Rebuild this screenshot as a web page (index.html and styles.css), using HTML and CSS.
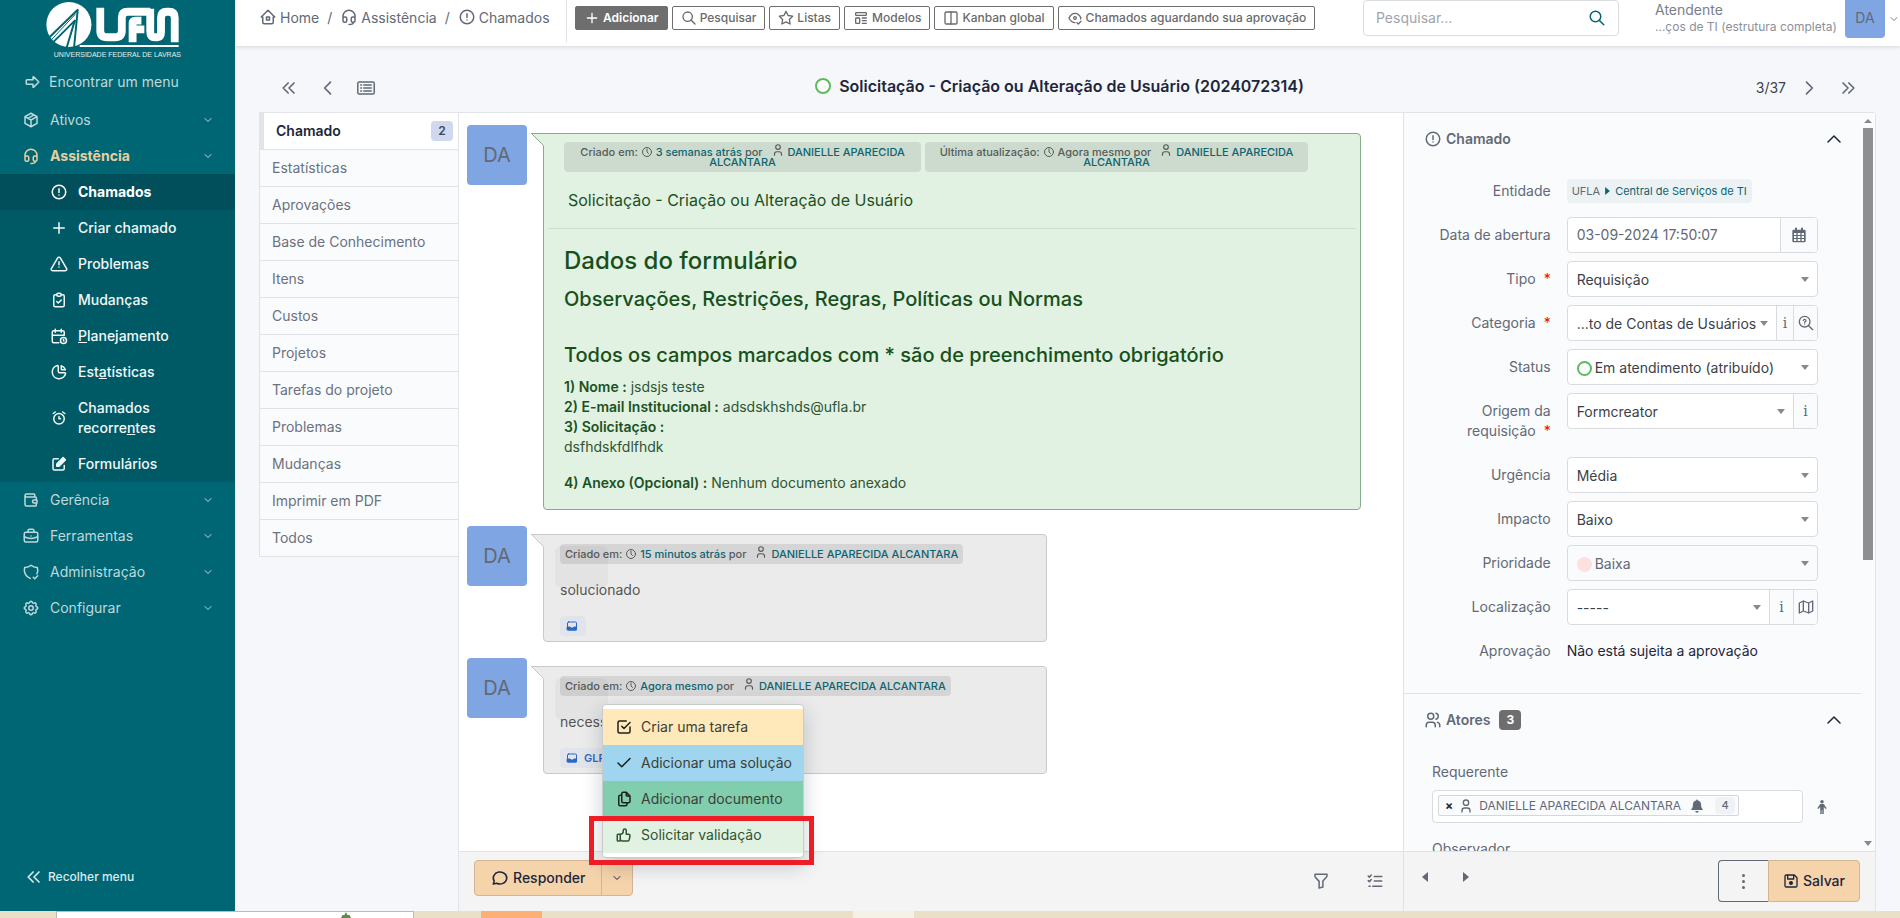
FILE: index.html
```html
<!DOCTYPE html>
<html lang="pt-BR">
<head>
<meta charset="utf-8">
<title>Solicitação - Criação ou Alteração de Usuário (2024072314)</title>
<link rel="stylesheet" href="styles.css">
</head>
<body>
<svg class="sprite" aria-hidden="true">
  <symbol id="arrow-right" viewBox="0 0 24 24"><path d="M4 9h8V5.500a.5.5 0 0 1 .85-.35l6.700 6.500a.5.5 0 0 1 0 .7l-6.700 6.500a.5.5 0 0 1-.85-.35V15H4a1 1 0 0 1-1-1v-4a1 1 0 0 1 1-1z"/></symbol>
  <symbol id="package" viewBox="0 0 24 24"><path d="M12 3l8 4.500v9L12 21l-8-4.500v-9zM12 12l8-4.500M12 12v9M12 12L4 7.500M16 5.250l-8 4.500"/></symbol>
  <symbol id="headset" viewBox="0 0 24 24"><path d="M4 14v-3a8 8 0 1 1 16 0v3M18 19c0 1.657-2.686 3-6 3M4 14a2 2 0 0 1 2-2h1a2 2 0 0 1 2 2v3a2 2 0 0 1-2 2H6a2 2 0 0 1-2-2zM15 14a2 2 0 0 1 2-2h1a2 2 0 0 1 2 2v3a2 2 0 0 1-2 2h-1a2 2 0 0 1-2-2z"/></symbol>
  <symbol id="alert-circle" viewBox="0 0 24 24"><circle cx="12" cy="12" r="9"/><path d="M12 7.500v5M12 16v.01"/></symbol>
  <symbol id="plus" viewBox="0 0 24 24"><path d="M12 5v14M5 12h14"/></symbol>
  <symbol id="alert-triangle" viewBox="0 0 24 24"><path d="M12 9v4M12 16v.01M10.240 3.960l-8.420 14.060A1.989 1.989 0 0 0 3.520 21h16.950a1.989 1.989 0 0 0 1.700-2.980L13.730 3.960a2 2 0 0 0-3.490 0z"/></symbol>
  <symbol id="clipboard" viewBox="0 0 24 24"><path d="M9 5H7a2 2 0 0 0-2 2v12a2 2 0 0 0 2 2h10a2 2 0 0 0 2-2V7a2 2 0 0 0-2-2h-2M9 14l2 2 4-4"/><rect x="9" y="3" width="6" height="4" rx="2"/></symbol>
  <symbol id="calendar-time" viewBox="0 0 24 24"><path d="M11.800 21H5a2 2 0 0 1-2-2V7a2 2 0 0 1 2-2h12a2 2 0 0 1 2 2v4M15 3v4M7 3v4M3 11h16M18 16.500V18l.5.5"/><circle cx="18" cy="18" r="4"/></symbol>
  <symbol id="chart-pie" viewBox="0 0 24 24"><path d="M10 3.200A9 9 0 1 0 20.800 14a1 1 0 0 0-1-1H13a2 2 0 0 1-2-2V4a.9.9 0 0 0-1-.8M15 3.500A9 9 0 0 1 20.500 9H16a1 1 0 0 1-1-1z"/></symbol>
  <symbol id="alarm" viewBox="0 0 24 24"><circle cx="12" cy="13" r="7"/><path d="M12 10v3h2M7 4L4.250 6M17 4l2.750 2"/></symbol>
  <symbol id="edit" viewBox="0 0 24 24"><path d="M11 5H6a2 2 0 0 0-2 2v11a2 2 0 0 0 2 2h11a2 2 0 0 0 2-2v-4"/><path fill="currentColor" d="M9 15v-3l8.500-8.500 3 3L12 15z"/></symbol>
  <symbol id="wallet" viewBox="0 0 24 24"><path d="M17 8V5a1 1 0 0 0-1-1H6a2 2 0 0 0 0 4h12a1 1 0 0 1 1 1v3m0 4v3a1 1 0 0 1-1 1H6a2 2 0 0 1-2-2V6M20 12v4h-4a2 2 0 0 1 0-4h4"/></symbol>
  <symbol id="briefcase" viewBox="0 0 24 24"><rect x="3" y="7" width="18" height="13" rx="2"/><path d="M8 7V5a2 2 0 0 1 2-2h4a2 2 0 0 1 2 2v2M12 12v.01M3 13a20 20 0 0 0 18 0"/></symbol>
  <symbol id="shield" viewBox="0 0 24 24"><path d="M11 20.500A12 12 0 0 1 3.500 6 12 12 0 0 0 12 3a12 12 0 0 0 8.500 3 12 12 0 0 1-.6 8.500M15 19l2 2 4-4"/></symbol>
  <symbol id="settings" viewBox="0 0 24 24"><path d="M10.325 4.317c.426-1.756 2.924-1.756 3.350 0a1.724 1.724 0 0 0 2.573 1.066c1.543-.94 3.310.826 2.370 2.370a1.724 1.724 0 0 0 1.065 2.572c1.756.426 1.756 2.924 0 3.350a1.724 1.724 0 0 0-1.066 2.573c.94 1.543-.826 3.310-2.370 2.370a1.724 1.724 0 0 0-2.572 1.065c-.426 1.756-2.924 1.756-3.350 0a1.724 1.724 0 0 0-2.573-1.066c-1.543.94-3.310-.826-2.370-2.370a1.724 1.724 0 0 0-1.065-2.572c-1.756-.426-1.756-2.924 0-3.350a1.724 1.724 0 0 0 1.066-2.573c-.94-1.543.826-3.310 2.370-2.370 1 .608 2.296.07 2.572-1.065z"/><circle cx="12" cy="12" r="3"/></symbol>
  <symbol id="chev-down" viewBox="0 0 24 24"><path d="M6 9l6 6 6-6"/></symbol>
  <symbol id="chev-up" viewBox="0 0 24 24"><path d="M4 16l8-8 8 8"/></symbol>
  <symbol id="chev-left" viewBox="0 0 24 24"><path d="M15 5l-7 7 7 7"/></symbol>
  <symbol id="chev-right" viewBox="0 0 24 24"><path d="M9 5l7 7-7 7"/></symbol>
  <symbol id="chevs-left" viewBox="0 0 24 24"><path d="M11 6l-6 6 6 6M18 6l-6 6 6 6"/></symbol>
  <symbol id="chevs-right" viewBox="0 0 24 24"><path d="M6 6l6 6-6 6M13 6l6 6-6 6"/></symbol>
  <symbol id="home" viewBox="0 0 24 24"><path d="M5 12H3l9-9 9 9h-2M5 12v7a2 2 0 0 0 2 2h10a2 2 0 0 0 2-2v-7M10 12h4v4h-4z"/></symbol>
  <symbol id="search" viewBox="0 0 24 24"><circle cx="10" cy="10" r="7"/><path d="M21 21l-6-6"/></symbol>
  <symbol id="star" viewBox="0 0 24 24"><path d="M12 17.750l-6.172 3.245 1.179-6.873-5-4.867 6.900-1L11.993 2l3.086 6.253 6.900 1-5 4.867 1.179 6.873z"/></symbol>
  <symbol id="template" viewBox="0 0 24 24"><rect x="4" y="4" width="16" height="4" rx="1"/><rect x="4" y="12" width="6" height="8" rx="1"/><path d="M14 12h6M14 16h6M14 20h6"/></symbol>
  <symbol id="columns" viewBox="0 0 24 24"><rect x="3" y="3" width="18" height="18" rx="2"/><path d="M12 3v18"/></symbol>
  <symbol id="eye-check" viewBox="0 0 24 24"><circle cx="12" cy="12" r="2"/><path d="M12 19c-4 0-7-3-9-7 2-4 5-7 9-7s7 3 9 7l-.8 1.500M15 19l2 2 4-4"/></symbol>
  <symbol id="list-box" viewBox="0 0 24 24"><rect x="1" y="4" width="22" height="16" rx="2"/><path d="M9 8h10M9 12h10M9 16h10M5 8h1M5 12h1M5 16h1"/></symbol>
  <symbol id="clock" viewBox="0 0 24 24"><circle cx="12" cy="12" r="9"/><path d="M12 6v6l3 3"/></symbol>
  <symbol id="user" viewBox="0 0 24 24"><circle cx="12" cy="7" r="4"/><path d="M6 21v-2a4 4 0 0 1 4-4h4a4 4 0 0 1 4 4v2"/></symbol>
  <symbol id="users" viewBox="0 0 24 24"><circle cx="9" cy="7" r="4"/><path d="M3 21v-2a4 4 0 0 1 4-4h4a4 4 0 0 1 4 4v2M16 3.130a4 4 0 0 1 0 7.750M21 21v-2a4 4 0 0 0-3-3.850"/></symbol>
  <symbol id="inbox" viewBox="0 0 24 24"><rect x="3" y="4" width="18" height="16" rx="2"/><path fill="currentColor" d="M3 14h5l2 2h4l2-2h5v6H3z"/></symbol>
  <symbol id="checkbox" viewBox="0 0 24 24"><path d="M9 11l3 3 8-8M20 12v6a2 2 0 0 1-2 2H6a2 2 0 0 1-2-2V6a2 2 0 0 1 2-2h9"/></symbol>
  <symbol id="check" viewBox="0 0 24 24"><path d="M4 12l5 5L20 6"/></symbol>
  <symbol id="files" viewBox="0 0 24 24"><path d="M15 3v4a1 1 0 0 0 1 1h4M18 17h-7a2 2 0 0 1-2-2V5a2 2 0 0 1 2-2h4l5 5v7a2 2 0 0 1-2 2zM16 17v2a2 2 0 0 1-2 2H7a2 2 0 0 1-2-2V9a2 2 0 0 1 2-2h2"/></symbol>
  <symbol id="thumb-up" viewBox="0 0 24 24"><path d="M7 11v8a1 1 0 0 1-1 1H4a1 1 0 0 1-1-1v-7a1 1 0 0 1 1-1h3a4 4 0 0 0 4-4V6a2 2 0 0 1 4 0v5h3a2 2 0 0 1 2 2l-1 5a2 3 0 0 1-2 2h-7a3 3 0 0 1-3-3"/></symbol>
  <symbol id="message" viewBox="0 0 24 24"><path d="M3 20l1.300-3.900a9 8 0 1 1 3.400 2.900z"/></symbol>
  <symbol id="filter" viewBox="0 0 24 24"><path d="M4 3h16v2.200a2 2 0 0 1-.6 1.400L14.500 12v8l-5 1.500V12.500L4.500 7A2 2 0 0 1 4 5.600z"/></symbol>
  <symbol id="list-check" viewBox="0 0 24 24"><path d="M3 5.500L4.500 7 7 4M3 11.500L4.500 13 7 10M4 19h1.500M11 6h10M11 12h10M9 19h12"/></symbol>
  <symbol id="floppy" viewBox="0 0 24 24"><path d="M6 3h11l4 4v12a2 2 0 0 1-2 2H5a2 2 0 0 1-2-2V5a2 2 0 0 1 2-2zM7 3v6h9V3"/><circle cx="12" cy="15" r="2" fill="currentColor"/></symbol>
  <symbol id="calendar" viewBox="0 0 24 24"><path fill="currentColor" stroke="none" fill-rule="evenodd" d="M6 1h3v3h6V1h3v3h2a2 2 0 0 1 2 2v15a2 2 0 0 1-2 2H4a2 2 0 0 1-2-2V6a2 2 0 0 1 2-2h2zM4.500 9v3h3.500V9zM10 9v3h4V9zM16 9v3h3.500V9zM4.500 13.500v3h3.500v-3zM10 13.500v3h4v-3zM16 13.500v3h3.500v-3zM4.500 18v3h3.500v-3zM10 18v3h4v-3zM16 18v3h3.500v-3z"/></symbol>
  <symbol id="zoom-q" viewBox="0 0 24 24"><circle cx="10" cy="10" r="8"/><path d="M22 22l-6-6M8 8a2 2 0 1 1 2 2.500v.5M10 13.500v.01"/></symbol>
  <symbol id="map" viewBox="0 0 24 24"><path d="M2 6l6-3 8 3 6-3v15l-6 3-8-3-6 3zM8 3v15M16 6v15"/></symbol>
  <symbol id="bell" viewBox="0 0 24 24"><path fill="currentColor" stroke="none" d="M12 1a1.500 1.500 0 0 1 1.500 1.500A7 7 0 0 1 19 9c0 5 1 7 3 9v1H2v-1c2-2 3-4 3-9a7 7 0 0 1 5.500-6.500A1.500 1.500 0 0 1 12 1zM9 20.500h6a3 3 0 0 1-6 0z"/></symbol>
  <symbol id="person" viewBox="0 0 24 24"><path fill="currentColor" stroke="none" d="M12 0a3 3 0 1 1 0 6 3 3 0 0 1 0-6zM9 7h6l5 7-2 1.500-3-4V24h-2.500v-7h-1v7H9V11.500l-3 4L4 14z"/></symbol>
  <symbol id="caret-down" viewBox="0 0 10 6"><path fill="currentColor" stroke="none" d="M1 0h8L5 5z"/></symbol>
  <symbol id="caret-up" viewBox="0 0 10 6"><path fill="currentColor" stroke="none" d="M1 5h8L5 1z"/></symbol>
  <symbol id="caret-left" viewBox="0 0 6 10"><path fill="currentColor" stroke="none" d="M6 0v10L0 5z"/></symbol>
  <symbol id="caret-right" viewBox="0 0 6 10"><path fill="currentColor" stroke="none" d="M0 0v10l6-5z"/></symbol>
</svg>

<div class="screen">
<div class="app">
  <aside class="sidebar">
    <a class="brand" href="#">
      <svg class="brand-mark" viewBox="0 0 136 50" aria-label="UFLA">
        <circle cx="23" cy="24" r="23" fill="#fff"/>
        <path d="M1 39L32 9 28 50M6 43L29 20 20 50" fill="none" stroke="#006673" stroke-width="2"/>
        <path d="M1 44L30 13" fill="none" stroke="#006673" stroke-width="1"/>
        <g fill="none" stroke="#fff" stroke-width="8">
          <path d="M55 7v23q0 7 7 7h8q7 0 7-7V17q0-6 6-6h23"/>
          <path d="M88 42V23q0-3 3-3h6M88 29h12"/>
          <path d="M106 8v23q0 6 5 6h2q4 0 4-5V17q0-6 6-6h2q6 0 6 6v25"/>
        </g>
        <path d="M34 46h101" stroke="#fff" stroke-width="2"/>
      </svg>
      <span class="brand-name">UNIVERSIDADE FEDERAL DE LAVRAS</span>
    </a>
    <nav class="menu">
      <a class="menu-find" href="#"><svg class="i18"><use href="#arrow-right"/></svg>Encontrar um menu</a>
      <a class="menu-item" href="#"><svg class="i18"><use href="#package"/></svg><span>Ativos</span><svg class="i12"><use href="#chev-down"/></svg></a>
      <a class="menu-item open" href="#"><svg class="i18"><use href="#headset"/></svg><span>Assistência</span><svg class="i12"><use href="#chev-down"/></svg></a>
      <div class="submenu">
        <a class="current" href="#"><svg class="i18"><use href="#alert-circle"/></svg><span>Chamados</span></a>
        <a href="#"><svg class="i18"><use href="#plus"/></svg><span>Criar chamado</span></a>
        <a href="#"><svg class="i18"><use href="#alert-triangle"/></svg><span>Problemas</span></a>
        <a href="#"><svg class="i18"><use href="#clipboard"/></svg><span>Mudanças</span></a>
        <a href="#"><svg class="i18"><use href="#calendar-time"/></svg><span><u>P</u>lanejamento</span></a>
        <a href="#"><svg class="i18"><use href="#chart-pie"/></svg><span>Est<u>a</u>tísticas</span></a>
        <a href="#"><svg class="i18"><use href="#alarm"/></svg><span>Chamados recorre<u>n</u>tes</span></a>
        <a href="#"><svg class="i18"><use href="#edit"/></svg><span>Formulários</span></a>
      </div>
      <a class="menu-item" href="#"><svg class="i18"><use href="#wallet"/></svg><span>Gerência</span><svg class="i12"><use href="#chev-down"/></svg></a>
      <a class="menu-item" href="#"><svg class="i18"><use href="#briefcase"/></svg><span>Ferramentas</span><svg class="i12"><use href="#chev-down"/></svg></a>
      <a class="menu-item" href="#"><svg class="i18"><use href="#shield"/></svg><span>Administração</span><svg class="i12"><use href="#chev-down"/></svg></a>
      <a class="menu-item" href="#"><svg class="i18"><use href="#settings"/></svg><span>Configurar</span><svg class="i12"><use href="#chev-down"/></svg></a>
    </nav>
    <button class="collapse" type="button"><svg class="i20"><use href="#chevs-left"/></svg>Recolher menu</button>
  </aside>

  <div class="main">
    <header class="topbar">
      <nav class="crumbs">
        <a href="#"><svg class="i18"><use href="#home"/></svg>Home</a><span>/</span>
        <a href="#"><svg class="i18"><use href="#headset"/></svg>Assistência</a><span>/</span>
        <a href="#"><svg class="i18"><use href="#alert-circle"/></svg>Chamados</a>
      </nav>
      <div class="actions">
        <button class="primary" type="button"><svg class="i16"><use href="#plus"/></svg>Adicionar</button>
        <button type="button"><svg class="i16"><use href="#search"/></svg>Pesquisar</button>
        <button type="button"><svg class="i16"><use href="#star"/></svg>Listas</button>
        <button type="button"><svg class="i16"><use href="#template"/></svg>Modelos</button>
        <button type="button"><svg class="i16"><use href="#columns"/></svg>Kanban global</button>
        <button type="button"><svg class="i16"><use href="#eye-check"/></svg>Chamados aguardando sua aprovação</button>
      </div>
      <form class="search">
        <input type="text" placeholder="Pesquisar..." aria-label="Pesquisar">
        <button type="button" aria-label="Buscar"><svg class="i18"><use href="#search"/></svg></button>
      </form>
      <div class="account">
        <div class="account-text"><span>Atendente</span><small>...ços de TI (estrutura completa)</small></div>
        <span class="avatar-sm">DA</span>
        <svg class="i12"><use href="#chev-down"/></svg>
      </div>
    </header>

    <div class="titlebar">
      <div class="pager">
        <button type="button" aria-label="Primeiro"><svg class="i20"><use href="#chevs-left"/></svg></button>
        <button type="button" aria-label="Anterior"><svg class="i20"><use href="#chev-left"/></svg></button>
        <button type="button" aria-label="Lista"><svg class="i18"><use href="#list-box"/></svg></button>
      </div>
      <h1><i class="ring"></i>Solicitação - Criação ou Alteração de Usuário (2024072314)</h1>
      <div class="pager end">
        <span>3/37</span>
        <button type="button" aria-label="Próximo"><svg class="i20"><use href="#chev-right"/></svg></button>
        <button type="button" aria-label="Último"><svg class="i20"><use href="#chevs-right"/></svg></button>
      </div>
    </div>

    <div class="body">
      <nav class="tabs">
        <a class="active" href="#">Chamado<b>2</b></a>
        <a href="#">Estatísticas</a>
        <a href="#">Aprovações</a>
        <a href="#">Base de Conhecimento</a>
        <a href="#">Itens</a>
        <a href="#">Custos</a>
        <a href="#">Projetos</a>
        <a href="#">Tarefas do projeto</a>
        <a href="#">Problemas</a>
        <a href="#">Mudanças</a>
        <a href="#">Imprimir em PDF</a>
        <a href="#">Todos</a>
      </nav>

      <section class="card">
        <div class="timeline">
          <article class="entry">
            <span class="avatar">DA</span>
            <div class="bubble request">
              <svg class="tail" viewBox="0 0 13 13"><path class="tail-fill" d="M0 0h13v13z"/><path class="tail-line" d="M0 .5h13M0 0l12.500 12.500"/></svg>
              <div class="badges">
                <span class="stamp">Criado em: <svg class="i12"><use href="#clock"/></svg> <a href="#">3 semanas atrás</a> por <svg class="i14"><use href="#user"/></svg> <a href="#">DANIELLE APARECIDA ALCANTARA</a></span>
                <span class="stamp">Última atualização: <svg class="i12"><use href="#clock"/></svg> Agora mesmo por <svg class="i14"><use href="#user"/></svg> <a href="#">DANIELLE APARECIDA ALCANTARA</a></span>
              </div>
              <p class="subject">Solicitação - Criação ou Alteração de Usuário</p>
              <div class="form-data">
                <h2>Dados do formulário</h2>
                <h3>Observações, Restrições, Regras, Políticas ou Normas</h3>
                <h3>Todos os campos marcados com * são de preenchimento obrigatório</h3>
                <p><b>1) Nome :</b> jsdsjs teste</p>
                <p><b>2) E-mail Institucional :</b> adsdskhshds@ufla.br</p>
                <p><b>3) Solicitação :</b></p>
                <p>dsfhdskfdlfhdk</p>
                <p class="last"><b>4) Anexo (Opcional) :</b> Nenhum documento anexado</p>
              </div>
            </div>
          </article>
          <article class="entry">
            <span class="avatar">DA</span>
            <div class="bubble note">
              <svg class="tail" viewBox="0 0 13 13"><path class="tail-fill" d="M0 0h13v13z"/><path class="tail-line" d="M0 .5h13M0 0l12.500 12.500"/></svg>
              <span class="stamp">Criado em: <svg class="i12"><use href="#clock"/></svg> <a href="#">15 minutos atrás</a> por <svg class="i14"><use href="#user"/></svg> <a href="#">DANIELLE APARECIDA ALCANTARA</a></span>
              <p>solucionado</p>
              <span class="source"><svg class="i12"><use href="#inbox"/></svg></span>
            </div>
          </article>
          <article class="entry">
            <span class="avatar">DA</span>
            <div class="bubble note">
              <svg class="tail" viewBox="0 0 13 13"><path class="tail-fill" d="M0 0h13v13z"/><path class="tail-line" d="M0 .5h13M0 0l12.500 12.500"/></svg>
              <span class="stamp">Criado em: <svg class="i12"><use href="#clock"/></svg> <a href="#">Agora mesmo</a> por <svg class="i14"><use href="#user"/></svg> <a href="#">DANIELLE APARECIDA ALCANTARA</a></span>
              <p>necess</p>
              <span class="source"><svg class="i12"><use href="#inbox"/></svg>GLP</span>
            </div>
          </article>
        </div>

        <div class="fields">
          <div class="fields-scroll">
            <div class="section-head"><svg class="i18"><use href="#alert-circle"/></svg><h2>Chamado</h2><svg class="i18 toggle"><use href="#chev-up"/></svg></div>
            <div class="form">
              <div class="row"><span class="label">Entidade</span><div class="control"><span class="entity">UFLA <svg class="caret-r"><use href="#caret-right"/></svg> <a href="#">Central de Serviços de TI</a></span></div></div>
              <div class="row"><label for="f-date">Data de abertura</label><div class="control box"><input id="f-date" type="text" value="03-09-2024 17:50:07"><button class="cal" type="button" aria-label="Calendário"><svg class="i16"><use href="#calendar"/></svg></button></div></div>
              <div class="row"><label for="f-type">Tipo <em>*</em></label><div class="control box"><div class="pick"><select id="f-type"><option>Requisição</option></select><svg class="caret"><use href="#caret-down"/></svg></div></div></div>
              <div class="row"><label for="f-cat">Categoria <em>*</em></label><div class="control box"><div class="pick tight"><select id="f-cat"><option>...to de Contas de Usuários</option></select><svg class="caret"><use href="#caret-down"/></svg></div><button class="info slim" type="button">i</button><button class="info" type="button" aria-label="Buscar categoria"><svg class="i16"><use href="#zoom-q"/></svg></button></div></div>
              <div class="row"><label for="f-status">Status</label><div class="control box"><div class="pick"><i class="ring"></i><select id="f-status"><option>Em atendimento (atribuído)</option></select><svg class="caret"><use href="#caret-down"/></svg></div></div></div>
              <div class="row tall"><label for="f-src">Origem da requisição <em>*</em></label><div class="control box"><div class="pick"><select id="f-src"><option>Formcreator</option></select><svg class="caret"><use href="#caret-down"/></svg></div><button class="info" type="button">i</button></div></div>
              <div class="row"><label for="f-urg">Urgência</label><div class="control box"><div class="pick"><select id="f-urg"><option>Média</option></select><svg class="caret"><use href="#caret-down"/></svg></div></div></div>
              <div class="row"><label for="f-imp">Impacto</label><div class="control box"><div class="pick"><select id="f-imp"><option>Baixo</option></select><svg class="caret"><use href="#caret-down"/></svg></div></div></div>
              <div class="row"><label for="f-pri">Prioridade</label><div class="control box readonly"><div class="pick"><i class="dot"></i><select id="f-pri"><option>Baixa</option></select><svg class="caret"><use href="#caret-down"/></svg></div></div></div>
              <div class="row"><label for="f-loc">Localização</label><div class="control box"><div class="pick"><select id="f-loc"><option>-----</option></select><svg class="caret"><use href="#caret-down"/></svg></div><button class="info" type="button">i</button><button class="info" type="button" aria-label="Mapa"><svg class="i16"><use href="#map"/></svg></button></div></div>
              <div class="row"><span class="label">Aprovação</span><div class="control text">Não está sujeita a aprovação</div></div>
            </div>
            <div class="section-head actors"><svg class="i18"><use href="#users"/></svg><h2>Atores</h2><b>3</b><svg class="i18 toggle"><use href="#chev-up"/></svg></div>
            <div class="actor-form">
              <span class="actor-label">Requerente</span>
              <div class="actor-row">
                <div class="actor-box"><span class="chip"><button type="button" aria-label="Remover">×</button><svg class="i16"><use href="#user"/></svg>DANIELLE APARECIDA ALCANTARA<svg class="i14"><use href="#bell"/></svg><b>4</b></span></div>
                <svg class="i14 self"><use href="#person"/></svg>
              </div>
              <span class="actor-label">Observador</span>
            </div>
          </div>
          <div class="scrollbar"><svg class="caret"><use href="#caret-up"/></svg><div class="track"><i></i></div><svg class="caret"><use href="#caret-down"/></svg></div>
        </div>

        <footer class="foot left">
          <div class="reply">
            <button class="reply-main" type="button"><svg class="i18"><use href="#message"/></svg>Responder</button><button class="reply-more" type="button" aria-label="Mais ações"><svg class="i12"><use href="#chev-down"/></svg></button>
            <div class="dropdown">
              <a class="task" href="#"><svg class="i18"><use href="#checkbox"/></svg>Criar uma tarefa</a>
              <a class="solution" href="#"><svg class="i18"><use href="#check"/></svg>Adicionar uma solução</a>
              <a class="document" href="#"><svg class="i18"><use href="#files"/></svg>Adicionar documento</a>
              <a class="validation" href="#"><svg class="i18"><use href="#thumb-up"/></svg>Solicitar validação</a>
              <i class="highlight"></i>
            </div>
          </div>
          <button class="plain" type="button" aria-label="Filtrar"><svg class="i18"><use href="#filter"/></svg></button>
          <button class="plain" type="button" aria-label="Lista de tarefas"><svg class="i18"><use href="#list-check"/></svg></button>
        </footer>
        <footer class="foot right">
          <button class="plain step" type="button" aria-label="Anterior"><svg class="arrow"><use href="#caret-left"/></svg></button>
          <button class="plain step" type="button" aria-label="Próximo"><svg class="arrow"><use href="#caret-right"/></svg></button>
          <div class="save-group"><button class="more" type="button" aria-label="Mais"><i></i><i></i><i></i></button><button class="save" type="button"><svg class="i16"><use href="#floppy"/></svg>Salvar</button></div>
        </footer>
      </section>
    </div>
  </div>
</div>
<div class="strip"><i class="s-field"><svg viewBox="0 0 10 6"><path d="M5 0l1.500 3h2L10 6H0l1.500-3h2z" fill="#5f8a4a"/></svg></i><i class="s-active"></i><i class="s-light"></i></div>
</div>
</body>
</html>
```
FILE: styles.css
```css
* { box-sizing: border-box; }
body { margin: 0; font: 14px/20px Inter, "Liberation Sans", sans-serif; color: #1d273b; }
a { color: inherit; text-decoration: none; }
button, input, select { font: inherit; color: inherit; margin: 0; padding: 0; border: 0; background: none; }
h1, h2, h3, p { margin: 0; }
i { font-style: normal; }
svg { fill: none; stroke: currentColor; stroke-width: 2; stroke-linecap: round; stroke-linejoin: round; flex: none; }
.sprite { position: absolute; width: 0; height: 0; }
.i12 { width: 12px; height: 12px; }
.i14 { width: 14px; height: 14px; }
.i16 { width: 16px; height: 16px; }
.i18 { width: 18px; height: 18px; }
.i20 { width: 20px; height: 20px; }

.screen { display: flex; flex-direction: column; height: 100vh; overflow: hidden; }
.app { flex: 1; min-height: 0; display: flex; background: #f5f7fb; }

/* Sidebar */
.sidebar { width: 235px; flex: none; display: flex; flex-direction: column; background: #006673; color: #bfd8db; }
.brand { display: block; width: 136px; margin: 1px 0 0 45px; color: #e0eef0; }
.brand-mark { display: block; width: 136px; height: 49px; stroke: none; stroke-linecap: butt; }
.brand-name { display: block; font: 7px/9px "Liberation Sans", sans-serif; text-align: right; white-space: nowrap; }
.menu { flex: 1; }
.menu-find { display: flex; align-items: center; gap: 7px; height: 36px; margin: 5px 0 2px; padding-left: 24px; }
.menu-item { display: flex; align-items: center; gap: 10px; height: 36px; padding: 0 21px 0 22px; }
.menu-item span { flex: 1; }
.open { color: #e6cfa0; font-weight: 700; }
.open .i12 { color: #bfd8db; }
.submenu { background: #005a66; color: #f2f8f8; font-weight: 500; }
.submenu a { display: flex; align-items: center; gap: 10px; padding: 8px 48px 8px 50px; }
.submenu .current { background: #004f5a; color: #fff; font-weight: 700; }
.collapse { display: flex; align-items: center; gap: 4px; margin: 0 0 24px 24px; font-size: 12px; font-weight: 500; color: #dcebec; }

/* Top bar */
.main { flex: 1; min-width: 0; display: flex; flex-direction: column; }
.topbar { display: flex; align-items: flex-start; height: 46px; padding-left: 24px; background: #fff; color: #626976; box-shadow: 0 1px 4px rgba(30, 40, 60, .16); }
.crumbs { display: flex; gap: 8px; width: 308px; height: 42px; padding-top: 8px; border-right: 1px solid #dfe2e7; white-space: nowrap; }
.crumbs a { display: flex; gap: 3px; }
.actions { display: flex; gap: 4px; padding: 6px 0 0 8px; white-space: nowrap; }
.actions button { display: flex; align-items: center; gap: 3px; height: 24px; padding: 0 8px; border: 1px solid #6e6e6e; border-radius: 2px; font-size: 12px; line-height: 16px; font-weight: 500; color: #6a6a6a; }
.actions .primary { background: #6e6e6e; color: #fff; font-weight: 600; }
.search { display: flex; width: 256px; height: 36px; margin-left: auto; border: 1px solid #dadcde; border-radius: 4px; }
.search input { flex: 1; min-width: 0; padding-left: 12px; outline: 0; }
.search input::placeholder { color: #a0a5ad; opacity: 1; }
.search button { display: flex; align-items: center; padding-right: 12px; color: #006673; }
.account { display: flex; width: 281px; padding-left: 36px; color: #7a808b; }
.account-text { width: 190px; white-space: nowrap; line-height: 17px; padding-top: 1px; }
.account-text span, .account-text small { display: block; }
.account-text small { font-size: 12px; color: #8b909a; }
.avatar-sm { width: 40px; height: 38px; border-radius: 0 0 4px 4px; background: #80a5e3; color: #626976; line-height: 36px; text-align: center; }
.account .i12 { margin: 13px 0 0 3px; }

/* Title bar */
.titlebar { display: grid; grid-template-columns: 1fr auto 1fr; align-items: center; height: 66px; padding: 18px 24px 0; }
.pager { display: flex; align-items: center; gap: 19px; padding-left: 20px; color: #626976; }
.pager button { display: flex; }
.pager.end { justify-content: flex-end; padding: 0 18px 0 0; }
.pager span { margin-right: -6px; color: #3a4353; }
h1 { display: flex; align-items: center; gap: 8px; padding: 0 16px 4px 0; font-size: 16px; line-height: 24px; font-weight: 600; }
.ring { flex: none; width: 16px; height: 16px; border: 2px solid #5dbb5d; border-radius: 50%; }
h1 .ring { background: #fff; }

/* Body */
.body { flex: 1; min-height: 0; display: flex; padding: 0 24px; }
.tabs { width: 199px; flex: none; display: flex; flex-direction: column; align-items: stretch; border-top: 1px solid #e2e5ea; }
.tabs a { display: flex; align-items: center; height: 37px; padding-left: 12px; border: 1px solid #dfe2e6; border-width: 0 0 1px 1px; background: #fafbfd; color: #6b7280; }
.tabs .active { background: #fff; border-left: 5px solid #e2e4e8; color: #1d273b; font-weight: 600; justify-content: space-between; padding-right: 5px; }
.tabs b { width: 22px; height: 20px; border-radius: 4px; background: #d0d8ef; color: #3b4660; font-size: 12px; text-align: center; font-weight: 600; }
.card { flex: 1; min-width: 0; display: grid; grid-template-columns: 2fr 1fr; grid-template-rows: 1fr 60px; border: 1px solid #e0e3e8; border-bottom: 0; border-radius: 0 4px 0 0; background: #fff; }
.timeline { min-height: 0; overflow: hidden; padding: 12px 42px 0 8px; }
.entry { display: flex; align-items: flex-start; gap: 16px; margin-bottom: 16px; }
.avatar { width: 60px; height: 60px; flex: none; border-radius: 4px; background: #80a5e3; color: #626976; font-size: 20px; line-height: 60px; text-align: center; }
.bubble { position: relative; margin-top: 8px; border: 1px solid; border-radius: 0 4px 4px 4px; }
.tail { position: absolute; left: -13px; top: -1px; width: 13px; height: 13px; stroke-linecap: butt; stroke-width: 1; }
.tail-fill { stroke: none; }
.request { flex: 1; border-color: #84ad8c; background: #e1f1e2; color: #2d5532; }
.request .tail { color: #84ad8c; }
.request .tail-fill { fill: #e1f1e2; }
.note { width: 504px; height: 108px; padding: 8px 16px; border-color: #c9c9c9; background: #ebebeb; color: #555; }
.note .tail { color: #c9c9c9; }
.note .tail-fill { fill: #ebebeb; }
.note::before { content: ""; position: absolute; left: 11px; top: 11px; width: 53px; height: 42px; border-radius: 6px; background: rgba(0, 0, 0, .03); }
.badges { display: flex; gap: 4px; padding: 8px 52px 0 20px; }
.stamp { padding: 5px; border-radius: 4px; background: rgba(0, 0, 0, .09); color: #555c5a; font-size: 11px; line-height: 10px; font-weight: 500; text-align: center; }
.badges .stamp { flex: 0 1 auto; height: 30px; }
.stamp svg { margin: -4px 0 -2px 0; vertical-align: baseline; }
.stamp .i14 { margin-left: 5px; margin-bottom: -1px; }
.stamp a, .entity a { color: #0b6472; }
.note .stamp { display: inline-block; height: 20px; white-space: nowrap; }
.note p { margin-top: 16px; }
.source { display: inline-flex; align-items: center; gap: 6px; height: 20px; min-width: 26px; margin-top: 16px; padding: 0 6px; border-radius: 4px; background: #e1e5eb; color: #2a68c8; font-size: 11px; font-weight: 600; }
.subject { margin: 0 4px; padding: 16px 20px 16px; border-bottom: 1px solid #cbdccd; font-size: 16px; line-height: 24px; color: #1b511f; }
.form-data { padding: 16px 20px; }
.form-data h2 { font-size: 24px; line-height: 32px; font-weight: 500; color: #17501a; }
.form-data h3 { margin: 8px 0 28px; font-size: 20px; line-height: 28px; font-weight: 500; color: #17501a; }
.form-data h3 + h3 { margin-bottom: 8px; }
.form-data b { font-weight: 600; color: #1b511f; }
.form-data .last { margin-top: 16px; }

/* Fields panel */
.fields { min-height: 0; display: flex; border-left: 1px solid #dfe2e6; background: #fafbfd; color: #626976; }
.fields-scroll { flex: 1; min-width: 0; overflow: hidden; }
.section-head { display: flex; align-items: center; gap: 4px; padding: 16px 18px 0 20px; }
.section-head h2 { font-size: 14px; line-height: 20px; font-weight: 600; }
.section-head b { width: 22px; height: 20px; margin-left: 5px; border-radius: 4px; background: #6e6e6e; color: #fff; font-size: 12px; text-align: center; }
.toggle { margin-left: auto; color: #1d273b; }
.form { display: flex; flex-direction: column; gap: 8px; padding: 24px 43px 24px 21px; }
.row { display: grid; grid-template-columns: minmax(0, 1fr) minmax(0, 2fr); gap: 16px; min-height: 36px; }
.row label, .label { padding-top: 8px; text-align: right; }
.tall { min-height: 56px; }
em { margin-left: 4px; color: #f00; font-style: normal; }
.control { display: flex; align-items: center; height: 36px; white-space: nowrap; }
.box { border: 1px solid #d9dbde; border-radius: 4px; background: #fff; color: #3c4048; }
.box input { flex: 1; min-width: 0; padding-left: 9px; color: #626976; }
.cal, .info { display: flex; align-items: center; justify-content: center; align-self: stretch; flex: none; width: 24px; border-left: 1px solid #d9dbde; background: #fafbfd; color: #626976; border-radius: 0 3px 3px 0; }
.cal { width: 37px; }
.info { font-family: "DejaVu Serif", serif; }
.slim { width: 17px; }
.pick { display: flex; align-items: center; flex: 1; min-width: 0; gap: 4px; padding: 2px 7px 0 9px; }
.tight { gap: 1px; }
.pick select { flex: 1; min-width: 0; appearance: none; outline: 0; }
.caret { width: 10px; height: 6px; color: #888; }
.dot { flex: none; width: 15px; height: 15px; border-radius: 50%; background: #ffe0e0; }
.pick .ring { width: 15px; height: 15px; }
.pick .ring + select, .dot + select { margin-left: -1px; }
.readonly { background: #fafbfd; color: #626976; }
.entity { display: inline-flex; align-items: center; gap: 5px; height: 24px; padding: 0 5px; border-radius: 4px; background: #ecf2f4; font-size: 11px; }
.caret-r { width: 5px; height: 8px; color: #0b6472; }
.text { color: #1d273b; }
.actors { border-top: 1px solid #dfe2e6; }
.actor-form { padding: 32px 18px 0 28px; }
.actor-label { display: block; }
.actor-row { display: flex; align-items: center; gap: 12px; margin: 8px 0 16px; }
.actor-box { flex: 1; height: 33px; padding: 4px 5px; border: 1px solid #d9dbde; border-radius: 4px; background: #fff; }
.chip { display: inline-flex; align-items: center; gap: 5px; height: 21px; padding: 0 3px 0 6px; border: 1px solid #d4d7db; border-radius: 2px; background: #fafbfd; font-size: 12px; white-space: nowrap; vertical-align: top; }
.chip button { color: #1d273b; font-weight: 700; }
.chip .i14 { margin-left: 4px; }
.chip b { width: 20px; height: 17px; margin-left: 6px; border-radius: 4px; background: #f0f2f5; font-size: 11px; line-height: 17px; text-align: center; font-weight: 500; }
.self { margin-right: 14px; }
.scrollbar { width: 14px; display: flex; flex-direction: column; align-items: center; padding: 5px 0 4px; gap: 4px; }
.track { flex: 1; width: 10px; }
.track i { display: block; height: 61%; background: #8f8f8f; }

/* Footers */
.foot { display: flex; border-top: 1px solid #dfe2e6; background: #f4f4f4; padding: 8px 15px; color: #626976; }
.reply { position: relative; display: flex; height: 36px; margin-right: auto; }
.reply button, .save { display: flex; align-items: center; justify-content: center; gap: 4px; border: 1px solid #d1b692; background: #f5d3ab; color: #1d273b; font-weight: 500; }
.reply-main { padding: 0 16px; border-radius: 4px 0 0 4px; }
.reply .reply-more { width: 32px; margin-left: -1px; border-radius: 0 4px 4px 0; }
.plain { display: flex; align-items: center; width: 18px; height: 42px; }
.foot.left .plain { margin-right: 36px; }
.foot.left .plain:last-child { margin-right: 4px; }
.dropdown { position: absolute; left: 128px; bottom: 38px; width: 202px; padding: 4px 0; border: 1px solid #c8cacc; border-radius: 4px; background: #fff; box-shadow: 0 8px 20px rgba(20, 30, 50, .22); }
.dropdown a { display: flex; align-items: center; gap: 8px; height: 36px; padding-left: 12px; color: #3c3f38; white-space: nowrap; }
.dropdown svg { color: #1c211c; }
.task { background: #ffe8b9; }
.solution { background: #9fd5ee; }
.document { background: #80cead; }
.validation { background: #e1f1e2; }
.dropdown .validation, .validation svg { color: #2d5532; }
.highlight { position: absolute; left: -14px; right: -11px; bottom: -8px; height: 49px; border: 5px solid #ee1c25; }
.foot.right { border-left: 1px solid #dfe2e6; }
.step { width: 41px; height: 34px; }
.arrow { width: 6px; height: 10px; margin-left: 3px; }
.save-group { display: flex; height: 42px; margin-left: auto; }
.more { display: flex; flex-direction: column; align-items: center; justify-content: center; gap: 3px; width: 50px; border: 1px solid #626976; border-right: 0; border-radius: 4px 0 0 4px; }
.more i { width: 3px; height: 3px; border-radius: 50%; background: #626976; }
.save { padding: 0 14px; border-radius: 0 4px 4px 0; }

/* Strip under the application */
.strip { flex: none; display: flex; height: 7px; padding-left: 56px; background: #eadfc7; }
.s-field { width: 358px; margin-right: 67px; padding-left: 284px; border: 1px solid #bbb; border-bottom: 0; background: #fff; }
.s-field svg { display: block; width: 10px; height: 6px; stroke: none; }
.s-active { width: 61px; margin-right: 311px; background: #fdb075; }
.s-light { width: 61px; background: #f5f1e6; }
```
